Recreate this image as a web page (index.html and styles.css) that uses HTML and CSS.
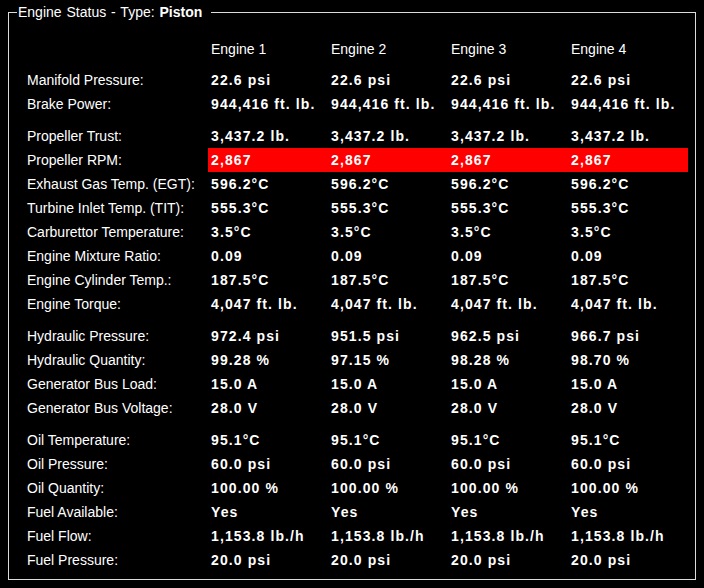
FILE: index.html
```html
<!DOCTYPE html>
<html>
<head>
<meta charset="utf-8">
<link rel="stylesheet" href="styles.css">
</head>
<body>
<fieldset class="panel">
  <legend class="panel-title">Engine Status - Type: <b>Piston</b></legend>
  <div class="grid">
    <div class="row head"><div class="label"></div><div class="cell">Engine 1</div><div class="cell">Engine 2</div><div class="cell">Engine 3</div><div class="cell">Engine 4</div></div>

    <div class="group">
      <div class="row"><div class="label">Manifold Pressure:</div><div class="cell v">22.6 psi</div><div class="cell v">22.6 psi</div><div class="cell v">22.6 psi</div><div class="cell v">22.6 psi</div></div>
      <div class="row"><div class="label">Brake Power:</div><div class="cell v">944,416 ft. lb.</div><div class="cell v">944,416 ft. lb.</div><div class="cell v">944,416 ft. lb.</div><div class="cell v">944,416 ft. lb.</div></div>
    </div>

    <div class="group">
      <div class="row"><div class="label">Propeller Trust:</div><div class="cell v">3,437.2 lb.</div><div class="cell v">3,437.2 lb.</div><div class="cell v">3,437.2 lb.</div><div class="cell v">3,437.2 lb.</div></div>
      <div class="row alert"><div class="label">Propeller RPM:</div><div class="cell v">2,867</div><div class="cell v">2,867</div><div class="cell v">2,867</div><div class="cell v">2,867</div></div>
      <div class="row"><div class="label">Exhaust Gas Temp. (EGT):</div><div class="cell v">596.2°C</div><div class="cell v">596.2°C</div><div class="cell v">596.2°C</div><div class="cell v">596.2°C</div></div>
      <div class="row"><div class="label">Turbine Inlet Temp. (TIT):</div><div class="cell v">555.3°C</div><div class="cell v">555.3°C</div><div class="cell v">555.3°C</div><div class="cell v">555.3°C</div></div>
      <div class="row"><div class="label">Carburettor Temperature:</div><div class="cell v">3.5°C</div><div class="cell v">3.5°C</div><div class="cell v">3.5°C</div><div class="cell v">3.5°C</div></div>
      <div class="row"><div class="label">Engine Mixture Ratio:</div><div class="cell v">0.09</div><div class="cell v">0.09</div><div class="cell v">0.09</div><div class="cell v">0.09</div></div>
      <div class="row"><div class="label">Engine Cylinder Temp.:</div><div class="cell v">187.5°C</div><div class="cell v">187.5°C</div><div class="cell v">187.5°C</div><div class="cell v">187.5°C</div></div>
      <div class="row"><div class="label">Engine Torque:</div><div class="cell v">4,047 ft. lb.</div><div class="cell v">4,047 ft. lb.</div><div class="cell v">4,047 ft. lb.</div><div class="cell v">4,047 ft. lb.</div></div>
    </div>

    <div class="group">
      <div class="row"><div class="label">Hydraulic Pressure:</div><div class="cell v">972.4 psi</div><div class="cell v">951.5 psi</div><div class="cell v">962.5 psi</div><div class="cell v">966.7 psi</div></div>
      <div class="row"><div class="label">Hydraulic Quantity:</div><div class="cell v">99.28 %</div><div class="cell v">97.15 %</div><div class="cell v">98.28 %</div><div class="cell v">98.70 %</div></div>
      <div class="row"><div class="label">Generator Bus Load:</div><div class="cell v">15.0 A</div><div class="cell v">15.0 A</div><div class="cell v">15.0 A</div><div class="cell v">15.0 A</div></div>
      <div class="row"><div class="label">Generator Bus Voltage:</div><div class="cell v">28.0 V</div><div class="cell v">28.0 V</div><div class="cell v">28.0 V</div><div class="cell v">28.0 V</div></div>
    </div>

    <div class="group">
      <div class="row"><div class="label">Oil Temperature:</div><div class="cell v">95.1°C</div><div class="cell v">95.1°C</div><div class="cell v">95.1°C</div><div class="cell v">95.1°C</div></div>
      <div class="row"><div class="label">Oil Pressure:</div><div class="cell v">60.0 psi</div><div class="cell v">60.0 psi</div><div class="cell v">60.0 psi</div><div class="cell v">60.0 psi</div></div>
      <div class="row"><div class="label">Oil Quantity:</div><div class="cell v">100.00 %</div><div class="cell v">100.00 %</div><div class="cell v">100.00 %</div><div class="cell v">100.00 %</div></div>
      <div class="row"><div class="label">Fuel Available:</div><div class="cell v">Yes</div><div class="cell v">Yes</div><div class="cell v">Yes</div><div class="cell v">Yes</div></div>
      <div class="row"><div class="label">Fuel Flow:</div><div class="cell v">1,153.8 lb./h</div><div class="cell v">1,153.8 lb./h</div><div class="cell v">1,153.8 lb./h</div><div class="cell v">1,153.8 lb./h</div></div>
      <div class="row"><div class="label">Fuel Pressure:</div><div class="cell v">20.0 psi</div><div class="cell v">20.0 psi</div><div class="cell v">20.0 psi</div><div class="cell v">20.0 psi</div></div>
    </div>
  </div>
</fieldset>
</body>
</html>
```
FILE: styles.css
```css
html, body {
  margin: 0;
  background: #000;
}
body {
  padding: 4px 8px 0 8px;
  font-family: "Liberation Sans", Arial, sans-serif;
  font-size: 14px;
  color: #fff;
}
.panel {
  margin: 0;
  padding: 17px 0 7px 15px;
  border: 1px solid #dcdcdc;
  min-width: 0;
}
.panel-title {
  margin-left: -7px;
  padding: 0 9px 0 1px;
  line-height: 16px;
  font-size: 14px;
  word-spacing: 1px;
}
.panel-title b {
  font-weight: bold;
  word-spacing: 0;
}
.grid {
  display: flex;
  flex-direction: column;
  gap: 8px;
}
.group {
  display: flex;
  flex-direction: column;
}
.row {
  display: grid;
  grid-template-columns: 184px repeat(4, 120px);
  height: 24px;
  line-height: 24px;
}
.row.head {
  margin-bottom: -1px;
}
.label, .cell {
  padding-left: 3px;
  white-space: nowrap;
}
.v {
  font-weight: bold;
  letter-spacing: 1.1px;
}
.alert .cell {
  background: #ff0000;
}
```
